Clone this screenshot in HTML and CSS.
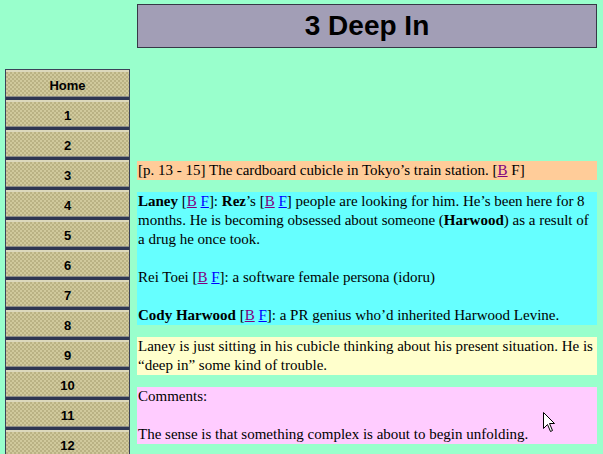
FILE: index.html
```html
<!DOCTYPE html>
<html lang="en">

<head>
    <title>3 Deep In</title>
    <link rel="stylesheet" href="styles.css">
</head>

<body>
    <div class="page">
        <div class="nav">
            <a class="nav-item" href="#">Home</a>
            <a class="nav-item" href="#">1</a>
            <a class="nav-item" href="#">2</a>
            <a class="nav-item" href="#">3</a>
            <a class="nav-item" href="#">4</a>
            <a class="nav-item" href="#">5</a>
            <a class="nav-item" href="#">6</a>
            <a class="nav-item" href="#">7</a>
            <a class="nav-item" href="#">8</a>
            <a class="nav-item" href="#">9</a>
            <a class="nav-item" href="#">10</a>
            <a class="nav-item" href="#">11</a>
            <a class="nav-item" href="#">12</a>
        </div>

        <div class="main">
            <h1 class="title">3 Deep In</h1>

            <div class="boxes">
                <div class="box box-ref">
                    [p. 13 - 15] The cardboard cubicle in Tokyo’s train station. [<a class="visited" href="#">B</a> F]
                </div>

                <div class="box box-people">
                    <p><b>Laney</b> [<a class="visited" href="#">B</a> <a href="#">F</a>]: <b>Rez</b>’s [<a class="visited" href="#">B</a> <a href="#">F</a>] people are looking for him. He’s been here for 8 months. He is becoming obsessed about someone (<b>Harwood</b>) as a result of a drug he once took.</p>
                    <p>Rei Toei [<a class="visited" href="#">B</a> <a href="#">F</a>]: a software female persona (idoru)</p>
                    <p><b>Cody Harwood</b> [<a class="visited" href="#">B</a> <a href="#">F</a>]: a PR genius who’d inherited Harwood Levine.</p>
                </div>

                <div class="box box-summary">
                    Laney is just sitting in his cubicle thinking about his present situation. He is “deep in” some kind of trouble.
                </div>

                <div class="box box-comments">
                    <p>Comments:</p>
                    <p>The sense is that something complex is about to begin unfolding.</p>
                </div>
            </div>
        </div>
    </div>

    <svg class="cursor" width="13" height="21" viewBox="0 0 13 21">
        <path d="M0.5 0.5 L0.5 16.5 L4.5 12.5 L7.5 19.5 L9.5 18.5 L6.5 11.5 L11.5 11.5 Z" fill="#ffffff" stroke="#000000" stroke-width="1"></path>
    </svg>
</body>

</html>
```

FILE: styles.css
```css
body {
    margin: 0;
    background-color: #99ffcc;
    font-family: "Liberation Serif", "Times New Roman", serif;
    color: #000000;
}

.page {
    display: flex;
    gap: 7px;
    padding-left: 5px;
}

/* left column of buttons */
.nav {
    width: 125px;
    margin-top: 69px;
    border: 1px solid #3c4258;
    border-bottom: none;
    box-sizing: border-box;
    display: flex;
    flex-direction: column;
}

.nav-item {
    display: block;
    height: 30px;
    box-sizing: border-box;
    padding-top: 2px;
    border-top: 2px solid #dcd8bc;
    border-bottom: 3px solid #2e3652;
    box-shadow: inset 0 -1px 0 #8c8c88;
    background: repeating-conic-gradient(#d0c99c 0 25%, #bab284 0 50%) 0 0 / 4px 4px;
    font-family: "Liberation Sans", Arial, sans-serif;
    font-size: 13px;
    font-weight: bold;
    line-height: 23px;
    text-align: center;
    color: #000000;
    text-decoration: none;
}

.main {
    width: 460px;
    padding-top: 4px;
}

.title {
    margin: 0 0 113px 0;
    height: 44px;
    box-sizing: border-box;
    border: 1px solid #363846;
    background-color: #a29eb6;
    font-family: "Liberation Sans", Arial, sans-serif;
    font-size: 28px;
    font-weight: bold;
    line-height: 42px;
    text-align: center;
    color: #000000;
}

.boxes {
    display: flex;
    flex-direction: column;
    gap: 12px;
}

.box {
    padding: 0 1px;
    font-size: 15px;
    line-height: 19px;
}

.box p {
    margin: 0;
}

.box p + p {
    margin-top: 19px;
}

.box-ref {
    background-color: #ffcc99;
}

.box-people {
    background-color: #66ffff;
}

.box-summary {
    background-color: #ffffcc;
}

.box-comments {
    background-color: #ffccff;
}

a {
    color: #0000ff;
}

a.visited {
    color: #800080;
}

.cursor {
    position: absolute;
    left: 543px;
    top: 412px;
}
```
